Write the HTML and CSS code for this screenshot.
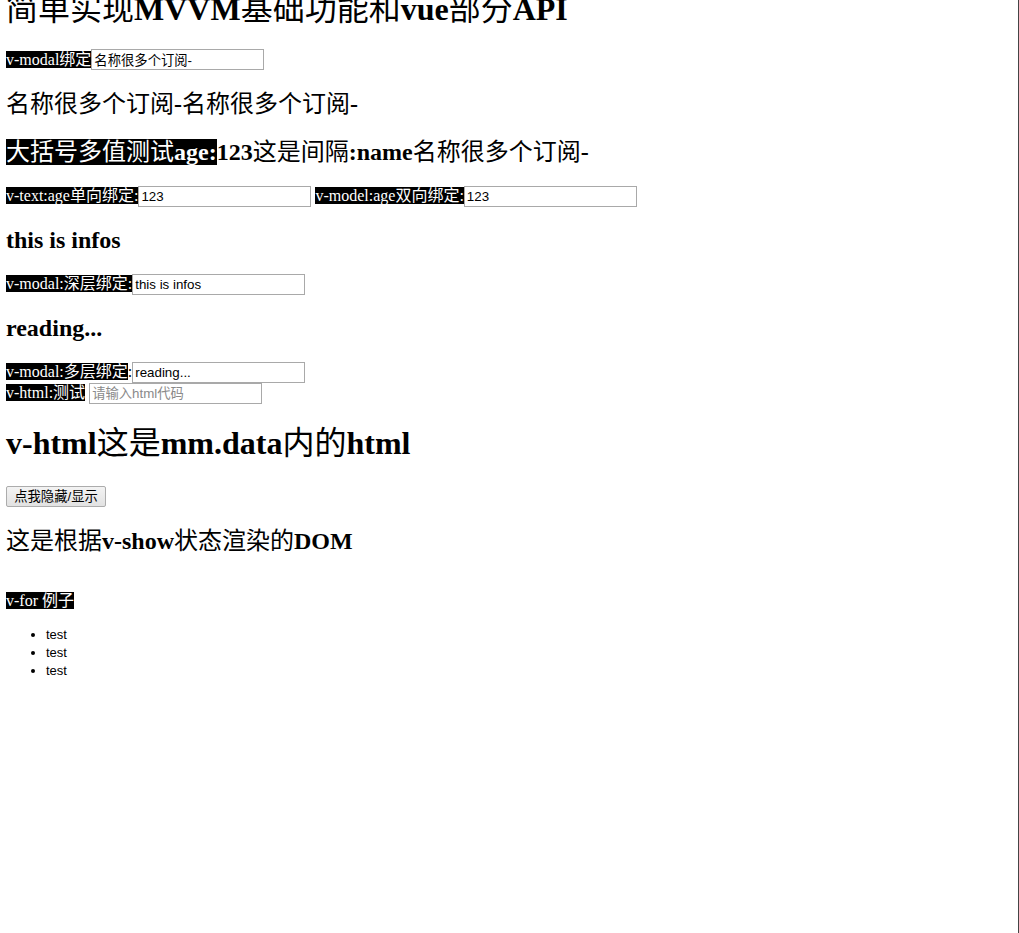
FILE: index.html
```html
<!DOCTYPE html>
<html lang="zh-CN">
<head>
<meta charset="utf-8">
<title>简单实现MVVM基础功能和vue部分API</title>
<link rel="stylesheet" href="styles.css">
</head>
<body>
<div class="app">
  <h1 class="title"><span class="zh">简单实现</span>MVVM<span class="zh">基础功能和</span>vue<span class="zh">部分</span>API</h1>

  <div class="row"><span class="tag">v-modal绑定</span><input class="field" type="text" value="名称很多个订阅-"></div>

  <h2 class="heading"><span class="zh">名称很多个订阅</span>-<span class="zh">名称很多个订阅</span>-</h2>

  <h2 class="heading"><span class="tag"><span class="zh">大括号多值测试</span>age:</span>123<span class="zh">这是间隔</span>:name<span class="zh">名称很多个订阅</span>-</h2>

  <div class="row"><span class="tag">v-text:age单向绑定:</span><input class="field" type="text" value="123"> <span class="tag">v-model:age双向绑定:</span><input class="field" type="text" value="123"></div>

  <h2 class="heading heading-tight">this is infos</h2>

  <div class="row"><span class="tag">v-modal:深层绑定:</span><input class="field" type="text" value="this is infos"></div>

  <h2 class="heading heading-tight">reading...</h2>

  <div class="row"><span class="tag">v-modal:多层绑定</span>:<input class="field" type="text" value="reading..."><br><span class="tag">v-html:测试</span> <input class="field" type="text" placeholder="请输入html代码"></div>

  <h1 class="html-out">v-html<span class="zh">这是</span>mm.data<span class="zh">内的</span>html</h1>

  <div class="toggle-row"><button class="toggle" type="button">点我隐藏/显示</button></div>

  <h2 class="heading"><span class="zh">这是根据</span>v-show<span class="zh">状态渲染的</span>DOM</h2>

  <div class="for-section">
    <div class="row"><span class="tag">v-for 例子</span></div>
    <ul class="items">
      <li>test</li>
      <li>test</li>
      <li>test</li>
    </ul>
  </div>
</div>
</body>
</html>
```

FILE: styles.css
```css
html {
  height: 100%;
  box-sizing: border-box;
  border-right: 1px solid #444;
  background: #fff;
}

body {
  margin: 0 6px;
  font-family: "Liberation Serif", "Noto Sans CJK SC", serif;
  font-size: 16px;
  line-height: 18px;
  color: #000;
}

.zh {
  font-weight: 400;
}

.title {
  font-size: 32px;
  line-height: 37px;
  font-weight: 700;
  margin: -9px 0 21.44px;
}

.html-out {
  font-size: 32px;
  line-height: 37px;
  font-weight: 700;
  margin: 21.44px 0;
}

.heading {
  font-size: 24px;
  line-height: 28px;
  font-weight: 700;
  margin: 19.92px 0;
}

.heading-tight {
  line-height: 27px;
}

.row {
  line-height: 18px;
}

.tag {
  background: #000;
  color: #fff;
}

.field {
  box-sizing: border-box;
  width: 173px;
  height: 21px;
  margin: 0;
  padding: 1px 2px;
  border: 1px solid #a9a9a9;
  font-family: "Liberation Sans", "Noto Sans CJK SC", sans-serif;
  font-size: 13.33px;
  line-height: 15px;
  color: #000;
  background: #fff;
  vertical-align: baseline;
}

.field::placeholder {
  color: #8a8a8a;
}

.toggle-row {
  padding-top: 2px;
  line-height: 18px;
}

.toggle {
  box-sizing: border-box;
  width: 100px;
  height: 21px;
  margin: 0;
  padding: 0 6px;
  border: 1px solid #acacac;
  border-radius: 2px;
  background: linear-gradient(#f3f3f3, #e2e2e2);
  font-family: "Liberation Sans", "Noto Sans CJK SC", sans-serif;
  font-size: 13.33px;
  line-height: 17px;
  color: #000;
}

.for-section {
  padding-top: 18px;
}

.items {
  margin: 16px 0;
  padding-left: 40px;
  font-family: "Liberation Sans", sans-serif;
  font-size: 13px;
  line-height: 18px;
}
```
